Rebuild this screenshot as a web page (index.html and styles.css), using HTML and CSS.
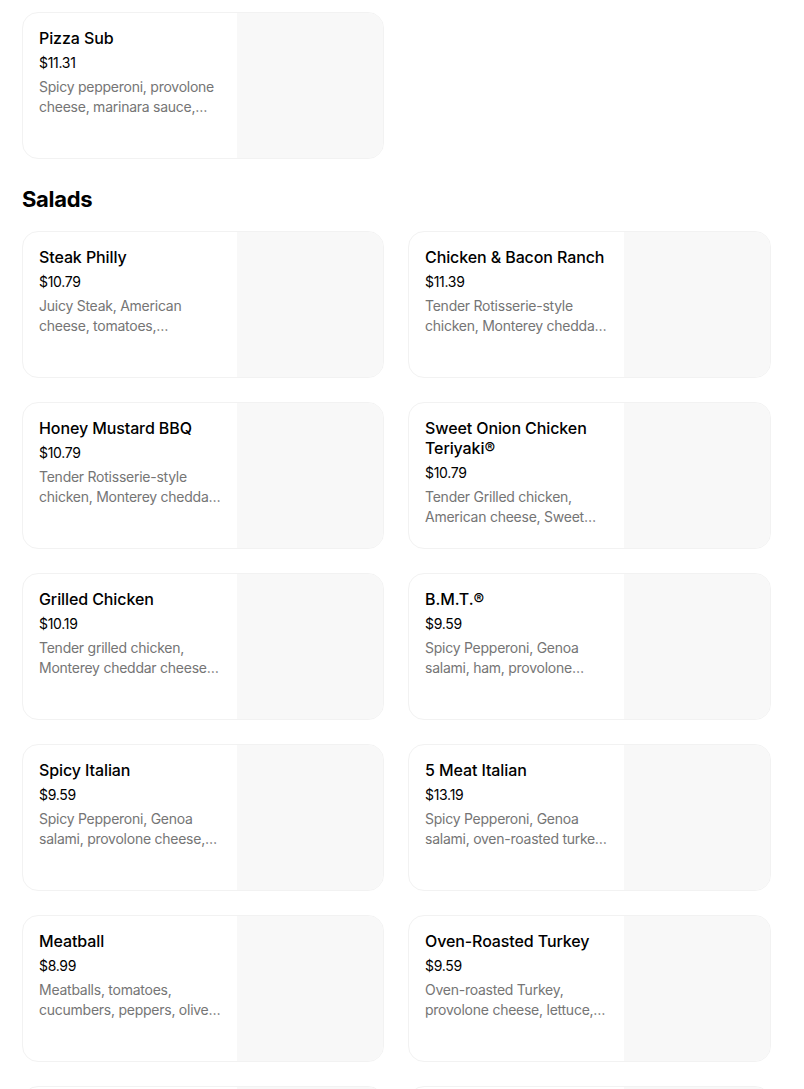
FILE: index.html
```html
<!DOCTYPE html>
<html>
<head>
<meta charset="utf-8">
<link rel="stylesheet" href="styles.css">
</head>
<body>
<main class="menu">
  <section class="grid">
    <div class="card"><div class="info"><div class="title">Pizza Sub</div><div class="price">$11.31</div><div class="desc">Spicy pepperoni, provolone cheese, marinara sauce, lettuce, tomatoes</div></div><div class="thumb"></div></div>
  </section>
  <h2 class="section-title">Salads</h2>
  <section class="grid">
    <div class="card"><div class="info"><div class="title">Steak Philly</div><div class="price">$10.79</div><div class="desc">Juicy Steak, American cheese, tomatoes, cucumbers, green peppers</div></div><div class="thumb"></div></div>
    <div class="card"><div class="info"><div class="title">Chicken &amp; Bacon Ranch</div><div class="price">$11.39</div><div class="desc">Tender Rotisserie-style chicken, Monterey cheddar cheese, bacon</div></div><div class="thumb"></div></div>
    <div class="card"><div class="info"><div class="title">Honey Mustard BBQ</div><div class="price">$10.79</div><div class="desc">Tender Rotisserie-style chicken, Monterey cheddar cheese, bacon</div></div><div class="thumb"></div></div>
    <div class="card"><div class="info"><div class="title">Sweet Onion Chicken Teriyaki®</div><div class="price">$10.79</div><div class="desc">Tender Grilled chicken, American cheese, Sweet Onion Teriyaki sauce</div></div><div class="thumb"></div></div>
    <div class="card"><div class="info"><div class="title">Grilled Chicken</div><div class="price">$10.19</div><div class="desc">Tender grilled chicken, Monterey cheddar cheese, lettuce, tomatoes</div></div><div class="thumb"></div></div>
    <div class="card"><div class="info"><div class="title">B.M.T.®</div><div class="price">$9.59</div><div class="desc">Spicy Pepperoni, Genoa salami, ham, provolone cheese, lettuce</div></div><div class="thumb"></div></div>
    <div class="card"><div class="info"><div class="title">Spicy Italian</div><div class="price">$9.59</div><div class="desc">Spicy Pepperoni, Genoa salami, provolone cheese, lettuce, tomatoes</div></div><div class="thumb"></div></div>
    <div class="card"><div class="info"><div class="title">5 Meat Italian</div><div class="price">$13.19</div><div class="desc">Spicy Pepperoni, Genoa salami, oven-roasted turkey, ham, provolone</div></div><div class="thumb"></div></div>
    <div class="card"><div class="info"><div class="title">Meatball</div><div class="price">$8.99</div><div class="desc">Meatballs, tomatoes, cucumbers, peppers, olives, lettuce</div></div><div class="thumb"></div></div>
    <div class="card"><div class="info"><div class="title">Oven-Roasted Turkey</div><div class="price">$9.59</div><div class="desc">Oven-roasted Turkey, provolone cheese, lettuce, tomatoes</div></div><div class="thumb"></div></div>
    <div class="card"><div class="info"><div class="title">Rotisserie-Style Chicken</div><div class="price">$10.19</div><div class="desc">Tender Rotisserie-style chicken, lettuce, tomatoes</div></div><div class="thumb"></div></div>
    <div class="card"><div class="info"><div class="title">Tuna</div><div class="price">$9.59</div><div class="desc">Tuna, lettuce, tomatoes, cucumbers, peppers</div></div><div class="thumb"></div></div>
  </section>
</main>
</body>
</html>
```
FILE: styles.css
```css
html, body {
  margin: 0;
  background: #ffffff;
}
body {
  font-family: Inter, "Noto Sans", "Liberation Sans", sans-serif;
  color: #000000;
  overflow: hidden;
}
.menu {
  width: 749px;
  padding: 12px 0 0 22px;
}
.grid {
  display: grid;
  grid-template-columns: 362px 363px;
  column-gap: 24px;
  row-gap: 24px;
}
.card {
  display: flex;
  height: 147px;
  box-sizing: border-box;
  border: 1px solid #f2f2f2;
  border-radius: 16px;
  overflow: hidden;
  background: #ffffff;
}
.info {
  flex: 1;
  min-width: 0;
  padding: 15px 16px 0 16px;
}
.thumb {
  width: 146px;
  flex: none;
  background: #f8f8f8;
}
.title {
  font-size: 16px;
  line-height: 20px;
  font-weight: 500;
  color: #000000;
  letter-spacing: -0.1px;
}
.price {
  margin-top: 5px;
  font-size: 14px;
  line-height: 20px;
  font-weight: 400;
  color: #000000;
  letter-spacing: -0.3px;
}
.desc {
  margin-top: 4px;
  font-size: 14px;
  line-height: 20px;
  color: #757575;
  letter-spacing: -0.25px;
  display: -webkit-box;
  -webkit-line-clamp: 2;
  -webkit-box-orient: vertical;
  overflow: hidden;
}
.section-title {
  margin: 24px 0 16px 0;
  font-size: 22px;
  line-height: 32px;
  font-weight: 700;
  letter-spacing: -0.3px;
}
```
